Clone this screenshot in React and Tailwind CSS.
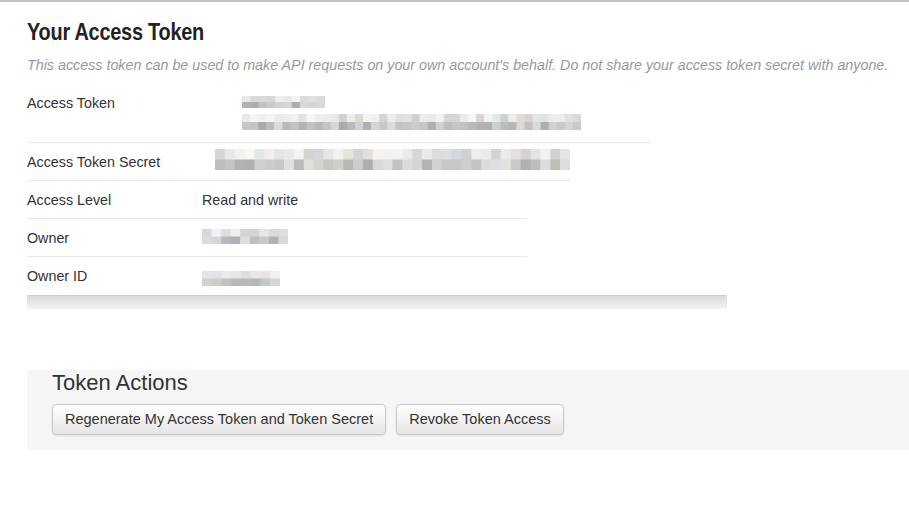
import React from "react";

// deterministic grey noise for the blurred-out values
function Pixelated({ w, h, cols, rows, seed }) {
  let s = seed;
  const rand = () => {
    s = (s * 9301 + 49297) % 233280;
    return s / 233280;
  };
  const cw = w / cols;
  const rh = h / rows;
  const cells = [];
  for (let r = 0; r < rows; r++) {
    for (let c = 0; c < cols; c++) {
      const base = r === 0 ? 208 + rand() * 38 : 170 + rand() * 55;
      const v = Math.round(base);
      const tint = Math.round((rand() - 0.5) * 10);
      cells.push(
        <rect
          key={r + "-" + c}
          x={c * cw}
          y={r * rh}
          width={cw + 0.5}
          height={rh + 0.5}
          fill={`rgb(${v + tint},${v},${v - tint})`}
        />
      );
    }
  }
  return (
    <svg width={w} height={h} className="block">
      {cells}
    </svg>
  );
}

function Row({ label, labelWidth, width, children, className = "" }) {
  return (
    <div
      className={`flex border-b border-[#e8e8e8] pt-[9px] pb-[8px] ${className}`}
      style={{ width }}
    >
      <div className="shrink-0 leading-5" style={{ width: labelWidth }}>
        {label}
      </div>
      <div className="leading-5">{children}</div>
    </div>
  );
}

export default function App() {
  return (
    <div
      className="w-[909px] h-[506px] overflow-hidden bg-white text-[#333] text-[14.3px]"
      style={{ fontFamily: "'Liberation Sans', Arial, sans-serif" }}
    >
      <div className="h-[2px] bg-[#c4c4c4]" />
      <div className="px-[27px]">
        <h1 className="mt-[15px] text-[24px] leading-[30px] font-bold text-[#222]">
          <span className="inline-block origin-left scale-x-[0.83] tracking-[-0.3px]">Your Access Token</span>
        </h1>
        <p className="mt-[8px] italic text-[#999] leading-5 whitespace-nowrap">
          This access token can be used to make API requests on your own account's behalf. Do not share your access token secret with anyone.
        </p>

        <div className="mt-[9px]">
          <Row label="Access Token" labelWidth={215} width={623} className="pb-[12px]">
            <div className="pt-[3px]">
              <Pixelated w={83} h={12} cols={10} rows={2} seed={11} />
            </div>
            <div className="mt-[6px]">
              <Pixelated w={339} h={16} cols={42} rows={2} seed={37} />
            </div>
          </Row>
          <Row label="Access Token Secret" labelWidth={188} width={544}>
            <div className="-mt-[3px]">
              <Pixelated w={355} h={21} cols={36} rows={2} seed={73} />
            </div>
          </Row>
          <Row label="Access Level" labelWidth={175} width={500}>
            Read and write
          </Row>
          <Row label="Owner" labelWidth={175} width={500}>
            <div className="pt-[1px]">
              <Pixelated w={86} h={15} cols={9} rows={2} seed={101} />
            </div>
          </Row>
          <div className="flex pt-[9px] pb-[9px]">
            <div className="w-[175px] leading-5">Owner ID</div>
            <div className="pt-[5px]">
              <Pixelated w={78} h={15} cols={8} rows={2} seed={59} />
            </div>
          </div>
          <div className="w-[700px] h-[14px] border-t border-[#cfcfcf] bg-gradient-to-b from-[#dadada] to-[#f3f3f3]" />
        </div>
      </div>

      <div className="ml-[27px] mt-[61px] h-[80px] rounded-l-[4px] bg-[#f6f6f6] pl-[25px]">
        <h2 className="text-[22px] leading-[26px] text-[#333]">Token Actions</h2>
        <div className="mt-[8px] flex gap-[10px]">
          <button className="h-[31px] px-[12px] rounded-[4px] border border-[#c8c8c8] bg-gradient-to-b from-white to-[#e6e6e6] text-[14.5px] text-[#333] shadow-[0_1px_2px_rgba(0,0,0,0.1)]">
            Regenerate My Access Token and Token Secret
          </button>
          <button className="h-[31px] px-[12px] rounded-[4px] border border-[#c8c8c8] bg-gradient-to-b from-white to-[#e6e6e6] text-[14.5px] text-[#333] shadow-[0_1px_2px_rgba(0,0,0,0.1)]">
            Revoke Token Access
          </button>
        </div>
      </div>
    </div>
  );
}
